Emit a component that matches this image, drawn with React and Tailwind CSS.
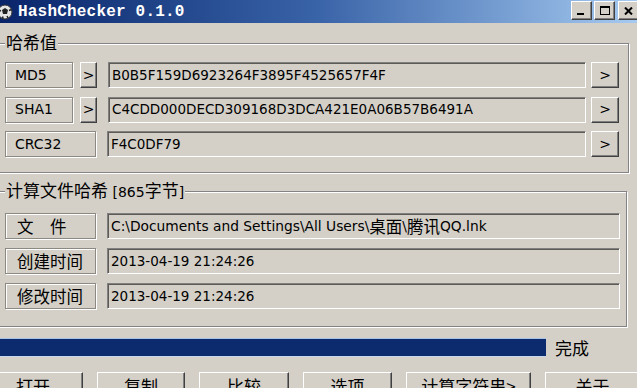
import React from "react";

function Raised({ className = "", children }) {
  return (
    <div className={`flex items-center justify-center bg-[#d4d0c8] border border-t-white border-l-white border-r-[#404040] border-b-[#404040] shadow-[inset_-1px_-1px_0_#808080] ${className}`}>
      {children}
    </div>
  );
}

function Tag({ className = "", children }) {
  return (
    <div className={`h-full flex items-center shrink-0 border border-[#8c8982] shadow-[inset_1px_1px_0_#fff,1px_1px_0_#fff] ${className}`}>
      {children}
    </div>
  );
}

function Field({ className = "text-[13.5px]", children }) {
  return (
    <div className={`flex-1 min-w-0 h-full flex items-center pl-[3px] whitespace-nowrap overflow-hidden border border-t-[#808080] border-l-[#808080] border-b-white border-r-white shadow-[inset_1px_1px_0_#5e5b56] ${className}`}>
      {children}
    </div>
  );
}

function Cjk({ children, size = "text-[16px]" }) {
  return <span className={`${size} font-['Noto_Sans_CJK_SC',sans-serif]`}>{children}</span>;
}

function HashRow({ name, value, small = true }) {
  return (
    <div className="h-[26px] flex items-center">
      {small ? (
        <>
          <Tag className="w-[68px] pl-[9px] text-[14px]">{name}</Tag>
          <Raised className="ml-[7px] w-[17px] h-full text-[14px]">&gt;</Raised>
        </>
      ) : (
        <Tag className="w-[91px] pl-[9px] text-[14px]">{name}</Tag>
      )}
      <div className="ml-[11px] flex-1 h-full flex">
        <Field>{value}</Field>
      </div>
      <Raised className="ml-[5px] w-[28px] h-[26px] text-[14px]">&gt;</Raised>
    </div>
  );
}

function FileRow({ name, fieldClass, children }) {
  return (
    <div className="h-[26px] flex items-center">
      <Tag className="w-[91px] pl-[11px]">
        <Cjk size="text-[16.5px]">{name}</Cjk>
      </Tag>
      <div className="ml-[11px] flex-1 h-full flex">
        <Field className={fieldClass}>{children}</Field>
      </div>
    </div>
  );
}

function AppIcon() {
  return (
    <svg width="16" height="16" viewBox="0 0 16 16" className="-ml-[3px] shrink-0">
      <circle cx="8" cy="8" r="7" fill="#e4e4e4" stroke="#333" strokeWidth="1" />
      <path d="M8 4 L11 6 L10 10 L6 10 L5 6 Z" fill="#222" />
      <path d="M1.5 6 L4 7 M12 6.5 L14.5 5.5 M6 12.5 L5.5 14.5 M10 12 L11 14" stroke="#222" strokeWidth="1.5" />
    </svg>
  );
}

export default function App() {
  const buttons = [
    { label: "打开...", w: "w-[86px]" },
    { label: "复制", w: "w-[88px]" },
    { label: "比较", w: "w-[90px]" },
    { label: "选项", w: "w-[89px]" },
    { label: "计算字符串>", w: "w-[125px]" },
    { label: "关于", w: "w-[95px]" },
  ];

  return (
    <div className="w-[637px] h-[388px] overflow-hidden bg-[#d4d0c8] flex flex-col text-black font-['DejaVu_Sans','Noto_Sans_CJK_SC',sans-serif]">
      {/* title bar */}
      <div className="h-[23px] shrink-0 flex items-center bg-linear-to-r from-[#0a246a] via-[#3a64a8] to-[#a6caf0]">
        <AppIcon />
        <span className="ml-[5px] text-white font-bold text-[16px] leading-none font-['Liberation_Mono',monospace] tracking-[0.2px]">
          HashChecker 0.1.0
        </span>
        <div className="ml-auto -mr-[2px] flex items-center gap-[2px] self-start mt-[1px]">
          <Raised className="w-[21px] h-[19px] items-end pb-[4px] justify-start pl-[5px]">
            <div className="w-[7px] h-[2px] bg-black" />
          </Raised>
          <Raised className="w-[21px] h-[19px]">
            <div className="w-[10px] h-[9px] border border-black border-t-2" />
          </Raised>
          <Raised className="ml-[1px] w-[21px] h-[19px]">
            <svg width="9" height="8" viewBox="0 0 9 8">
              <path d="M1 0.5 L8 7.5 M8 0.5 L1 7.5" stroke="#000" strokeWidth="2" />
            </svg>
          </Raised>
        </div>
      </div>

      {/* hash group */}
      <fieldset className="mt-[10px] -ml-[3px] w-[632px] shrink-0 border border-[#848284] shadow-[inset_1px_1px_0_#fff,1px_1px_0_#fff] pl-[7px] pr-[9px] pt-[9px] pb-[15px]">
        <legend className="bg-[#d4d0c8] px-[1px] leading-[18px]">
          <Cjk size="text-[17px]">哈希值</Cjk>
        </legend>
        <div className="flex flex-col gap-[8.5px]">
          <HashRow name="MD5" value="B0B5F159D6923264F3895F4525657F4F" />
          <HashRow name="SHA1" value="C4CDD000DECD309168D3DCA421E0A06B57B6491A" />
          <HashRow name="CRC32" value="F4C0DF79" small={false} />
        </div>
      </fieldset>

      {/* file group */}
      <fieldset className="mt-[8px] -ml-[3px] w-[630px] shrink-0 border border-[#848284] shadow-[inset_1px_1px_0_#fff,1px_1px_0_#fff] pl-[7px] pr-[6px] pt-[12px] pb-[17px]">
        <legend className="bg-[#d4d0c8] px-[1px] leading-[18px] whitespace-nowrap">
          <Cjk size="text-[17px]">计算文件哈希</Cjk>
          <span className="text-[14px]"> [865</span>
          <Cjk size="text-[17px]">字节</Cjk>
          <span className="text-[14px]">]</span>
        </legend>
        <div className="flex flex-col gap-[9px]">
          <FileRow name="文　件" fieldClass="text-[13.8px]">
            C:\Documents and Settings\All Users\<Cjk size="text-[16.5px]">桌面</Cjk>\<Cjk size="text-[16.5px]">腾讯</Cjk>QQ.lnk
          </FileRow>
          <FileRow name="创建时间">2013-04-19 21:24:26</FileRow>
          <FileRow name="修改时间">2013-04-19 21:24:26</FileRow>
        </div>
      </fieldset>

      {/* progress */}
      <div className="mt-[11px] h-[19px] shrink-0 flex items-center">
        <div className="-ml-[3px] w-[549px] h-full border-t border-t-[#a9c3e6] border-b border-b-[#c9d6ea] bg-[#0c2a6e]" />
        <Cjk size="text-[17px] ml-[9px]">完成</Cjk>
      </div>

      {/* buttons */}
      <div className="mt-[15px] -ml-[3px] flex gap-[14px] shrink-0">
        {buttons.map((b) => (
          <Raised key={b.label} className={`${b.w} h-[27px] shrink-0`}>
            <Cjk size="text-[17px]">{b.label}</Cjk>
          </Raised>
        ))}
      </div>
    </div>
  );
}
